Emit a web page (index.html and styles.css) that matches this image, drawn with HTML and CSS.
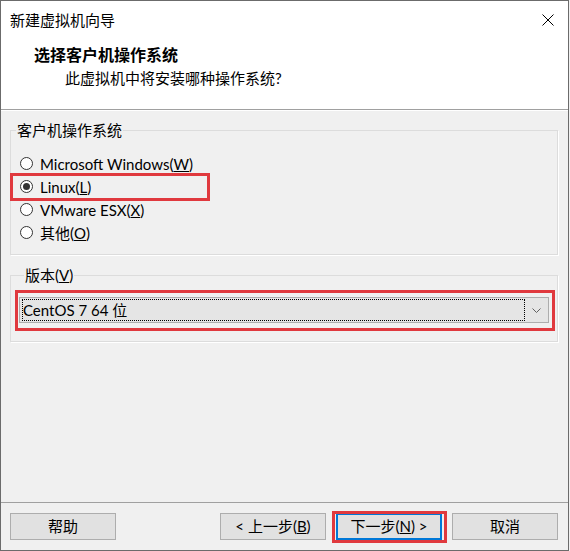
FILE: index.html
```html
<!DOCTYPE html>
<html lang="zh-CN">
<head>
<meta charset="utf-8">
<title>新建虚拟机向导</title>
<link rel="stylesheet" href="styles.css">
</head>
<body>
<div class="window">
  <div class="header">
    <div class="titlebar">
      <span class="title">新建虚拟机向导</span>
      <svg class="close" width="12" height="12" viewBox="0 0 12 12"><path d="M0.5 0.5L11.5 11.5M11.5 0.5L0.5 11.5" stroke="#000" stroke-width="1" fill="none"/></svg>
    </div>
    <div class="heading">选择客户机操作系统</div>
    <div class="subheading">此虚拟机中将安装哪种操作系统?</div>
  </div>
  <div class="content">
    <fieldset class="group group-os">
      <legend>客户机操作系统</legend>
      <div class="radio-row"><span class="radio"></span><span>Microsoft Windows(<u>W</u>)</span></div>
      <div class="radio-row"><span class="radio checked"></span><span>Linux(<u>L</u>)</span></div>
      <div class="radio-row"><span class="radio"></span><span>VMware ESX(<u>X</u>)</span></div>
      <div class="radio-row"><span class="radio"></span><span>其他(<u>O</u>)</span></div>
    </fieldset>
    <fieldset class="group group-ver">
      <legend>版本(<u>V</u>)</legend>
      <div class="combo">
        <div class="combo-value">CentOS 7 64 位</div>
        <span class="combo-arrow"><svg width="9" height="5" viewBox="0 0 9 5"><path d="M0.5 0.5L4.5 4.5L8.5 0.5" fill="none" stroke="#606060" stroke-width="1"/></svg></span>
      </div>
    </fieldset>
  </div>
  <div class="footer">
    <button class="btn">帮助</button>
    <div class="spacer"></div>
    <button class="btn">&lt; 上一步(<u>B</u>)</button>
    <button class="btn btn-default">下一步(<u>N</u>) &gt;</button>
    <button class="btn">取消</button>
  </div>
  <div class="mark mark-linux"></div>
  <div class="mark mark-combo"></div>
  <div class="mark mark-next"></div>
</div>
</body>
</html>
```
FILE: styles.css
```css
html, body {
  margin: 0;
  padding: 0;
}
body {
  font-family: Lato, "Noto Sans CJK SC", sans-serif;
  font-size: 15px;
  color: #000;
  background: #f0f0f0;
}
.window {
  position: relative;
  width: 569px;
  height: 551px;
  box-sizing: border-box;
  border: 1px solid #6b6b6b;
  display: flex;
  flex-direction: column;
  background: #f0f0f0;
}
.header {
  flex: none;
  height: 108px;
  background: #fff;
  border-bottom: 1px solid #a0a0a0;
}
.titlebar {
  height: 37px;
  display: flex;
  align-items: center;
  justify-content: space-between;
  padding: 0 14px 0 9px;
}
.title {
  line-height: 20px;
}
.close {
  display: block;
}
.heading {
  font-weight: bold;
  font-size: 16px;
  line-height: 22px;
  padding-left: 33px;
  margin-top: 6px;
}
.subheading {
  line-height: 22px;
  padding-left: 64px;
  margin-top: 1px;
}
.content {
  flex: 1;
  border-top: 1px solid #fff;
  padding: 10px 10px 0 9px;
}
.group {
  margin: 0;
  min-width: 0;
  border: 1px solid #dcdcdc;
  box-shadow: 1px 1px 0 #fff;
}
.group legend {
  margin-left: 5px;
  padding: 0 1px;
  line-height: 18px;
}
.group-os {
  padding: 13px 0 10px;
}
.group-ver {
  margin-top: 11px;
  padding: 13px 8px 18px;
}
.radio-row {
  display: flex;
  align-items: center;
  gap: 7px;
  height: 23px;
  padding-left: 9px;
  line-height: 20px;
}
.radio {
  flex: none;
  width: 13px;
  height: 13px;
  box-sizing: border-box;
  border: 1px solid #333;
  border-radius: 50%;
  background: #fff;
  display: flex;
  align-items: center;
  justify-content: center;
}
.radio.checked::after {
  content: "";
  width: 7px;
  height: 7px;
  border-radius: 50%;
  background: #333;
}
.combo {
  display: flex;
  height: 26px;
  box-sizing: border-box;
  border: 1px solid #adadad;
  background: #e5e5e5;
}
.combo-value {
  flex: none;
  width: 503px;
  margin: 1px 0 1px 2px;
  box-sizing: border-box;
  border: 1px dotted #000;
  line-height: 20px;
}
.combo-arrow {
  flex: 1;
  display: flex;
  align-items: center;
  justify-content: center;
}
.combo-arrow svg {
  display: block;
}
.footer {
  flex: none;
  height: 48px;
  box-sizing: border-box;
  border-top: 1px solid #a0a0a0;
  display: flex;
  align-items: flex-start;
  gap: 10px;
  padding: 10px 10px 0 9px;
}
.spacer {
  flex: 1;
}
.btn {
  flex: none;
  width: 106px;
  height: 27px;
  box-sizing: border-box;
  border: 1px solid #adadad;
  background: #e1e1e1;
  font-family: inherit;
  font-size: 15px;
  color: #000;
  padding: 0;
  line-height: 23px;
}
.btn-default {
  border: 2px solid #0078d7;
}
.mark {
  position: absolute;
  box-sizing: border-box;
  border: 3px solid #e0393e;
  pointer-events: none;
}
.mark-linux {
  left: 9px;
  top: 172px;
  width: 200px;
  height: 28px;
}
.mark-combo {
  left: 14px;
  top: 289px;
  width: 540px;
  height: 41px;
}
.mark-next {
  left: 331px;
  top: 510px;
  width: 115px;
  height: 32px;
}
```
